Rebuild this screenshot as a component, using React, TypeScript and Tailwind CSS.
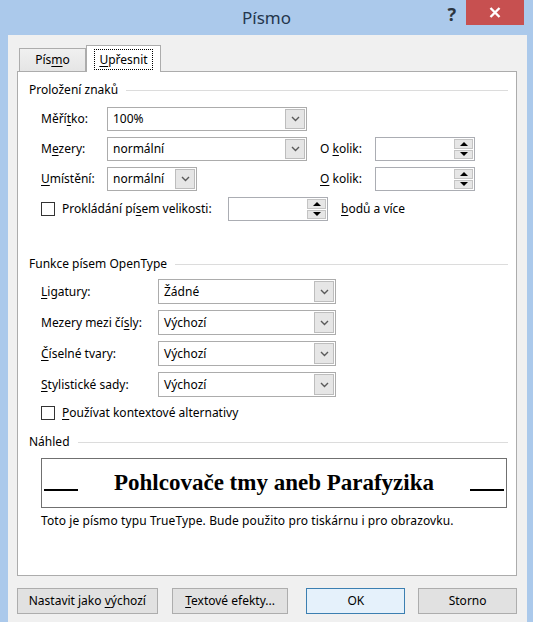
import type { ReactNode } from 'react'

function Chevron() {
  return (
    <svg width="9" height="6" viewBox="0 0 9 6">
      <path d="M1 1l3.5 3.5L8 1" stroke="#5a5a5a" strokeWidth="1.4" fill="none" />
    </svg>
  )
}

function Select({ value, className }: { value: string; className: string }) {
  return (
    <div className={`flex border border-[#acacac] bg-white ${className}`}>
      <span className="flex-1 pl-[5px] flex items-center">{value}</span>
      <span className="w-[20px] m-px border border-[#bdbdbd] bg-[#e6e6e6] flex items-center justify-center">
        <Chevron />
      </span>
    </div>
  )
}

function Spin({ className }: { className: string }) {
  return (
    <div className={`flex border border-[#abadb3] bg-white ${className}`}>
      <span className="flex-1" />
      <span className="w-[19px] m-px flex flex-col gap-px">
        <span className="flex-1 bg-[#e6e6e6] border border-[#c4c4c4] flex items-center justify-center">
          <span className="w-0 h-0 border-x-[4px] border-x-transparent border-b-[4px] border-b-black" />
        </span>
        <span className="flex-1 bg-[#e6e6e6] border border-[#c4c4c4] flex items-center justify-center">
          <span className="w-0 h-0 border-x-[4px] border-x-transparent border-t-[4px] border-t-black" />
        </span>
      </span>
    </div>
  )
}

function Heading({ children, className }: { children: ReactNode; className: string }) {
  return (
    <div className={`flex items-center h-[16px] pr-[8px] ${className}`}>
      <span>{children}</span>
      <span className="flex-1 ml-[8px] h-px bg-[#dcdcdc]" />
    </div>
  )
}

function Check() {
  return <span className="w-[14px] h-[14px] border border-[#333] bg-white shrink-0" />
}

function Button({ children, className }: { children: ReactNode; className: string }) {
  return (
    <div className={`h-[26px] flex items-center justify-center bg-[#e1e1e1] border ${className}`}>
      {children}
    </div>
  )
}

export default function App() {
  return (
    <div className="w-[533px] h-[622px] overflow-hidden bg-[#abc9eb] flex flex-col font-['Noto_Sans',sans-serif] text-[12px] text-black">
      {/* title bar */}
      <div className="h-[35px] flex shrink-0">
        <div className="flex-1" />
        <div className="pt-[5px] text-[17px] text-[#24364d]">Písmo</div>
        <div className="flex-1 flex justify-end items-start">
          <span className="mt-[2px] mr-[10px] text-[18px] font-bold text-[#2c3540] leading-[24px]">?</span>
          <span className="w-[58px] h-[25px] mr-[9px] bg-[#c75050] flex items-center justify-center">
            <svg width="12" height="11" viewBox="0 0 12 11">
              <path d="M1.5 1l9 9M10.5 1l-9 9" stroke="#fff" strokeWidth="2.4" />
            </svg>
          </span>
        </div>
      </div>

      {/* client area */}
      <div className="flex-1 ml-[8px] mr-[6px] bg-[#f0f0f0] flex flex-col pl-[9px] pr-[10px]">
        {/* tabs */}
        <div className="h-[36px] flex items-end pl-[2px]">
          <div className="w-[67px] h-[23px] border border-b-0 border-[#acacac] bg-gradient-to-b from-[#f0f0f0] to-[#e5e5e5] flex items-center justify-center">
            Pís<u className="underline-offset-2">m</u>o
          </div>
          <div className="w-[75px] h-[27px] -mb-px relative border border-b-0 border-[#acacac] bg-white flex items-center justify-center">
            <span className="px-[4px] py-[1px] border border-dotted border-black leading-[17px]">
              <u className="underline-offset-2">U</u>přesnit
            </span>
          </div>
        </div>

        {/* tab page */}
        <div className="h-[505px] border border-[#acacac] bg-white pl-[11px] flex flex-col">
          <Heading className="mt-[10px]">Proložení znaků</Heading>

          <div className="mt-[9px] h-[24px] flex items-center pl-[12px]">
            <span className="w-[66px]">Měří<u className="underline-offset-2">t</u>ko:</span>
            <Select value="100%" className="w-[200px] h-[24px]" />
          </div>

          <div className="mt-[6px] h-[24px] flex items-center pl-[12px]">
            <span className="w-[66px]">M<u className="underline-offset-2">e</u>zery:</span>
            <Select value="normální" className="w-[200px] h-[24px]" />
            <span className="ml-[13px] w-[55px]">O <u className="underline-offset-2">k</u>olik:</span>
            <Spin className="w-[100px] h-[24px]" />
          </div>

          <div className="mt-[6px] h-[24px] flex items-center pl-[12px]">
            <span className="w-[66px]"><u className="underline-offset-2">U</u>místění:</span>
            <Select value="normální" className="w-[90px] h-[24px]" />
            <span className="ml-[123px] w-[55px]"><u className="underline-offset-2">O</u> kolik:</span>
            <Spin className="w-[100px] h-[24px]" />
          </div>

          <div className="mt-[6px] h-[24px] flex items-center pl-[12px]">
            <Check />
            <span className="ml-[7px] w-[166px]">Prokládání pí<u className="underline-offset-2">s</u>em velikosti:</span>
            <Spin className="w-[100px] h-[24px]" />
            <span className="ml-[13px]"><u className="underline-offset-2">b</u>odů a více</span>
          </div>

          <Heading className="mt-[35px]">Funkce písem OpenType</Heading>

          <div className="mt-[7px] h-[25px] flex items-center pl-[12px]">
            <span className="w-[117px]"><u className="underline-offset-2">L</u>igatury:</span>
            <Select value="Žádné" className="w-[178px] h-[25px]" />
          </div>
          <div className="mt-[6px] h-[25px] flex items-center pl-[12px]">
            <span className="w-[117px]">Mezery mezi čí<u className="underline-offset-2">s</u>ly:</span>
            <Select value="Výchozí" className="w-[178px] h-[25px]" />
          </div>
          <div className="mt-[6px] h-[25px] flex items-center pl-[12px]">
            <span className="w-[117px]"><u className="underline-offset-2">Č</u>íselné tvary:</span>
            <Select value="Výchozí" className="w-[178px] h-[25px]" />
          </div>
          <div className="mt-[6px] h-[25px] flex items-center pl-[12px]">
            <span className="w-[117px]"><u className="underline-offset-2">S</u>tylistické sady:</span>
            <Select value="Výchozí" className="w-[178px] h-[25px]" />
          </div>

          <div className="mt-[8px] h-[16px] flex items-center pl-[12px]">
            <Check />
            <span className="ml-[7px]"><u className="underline-offset-2">P</u>oužívat kontextové alternativy</span>
          </div>

          <Heading className="mt-[13px]">Náhled</Heading>

          <div className="mt-[8px] ml-[12px] w-[466px] h-[50px] border border-[#707070] flex items-end pb-[16px] px-[2px]">
            <span className="w-[34px] border-b-2 border-black" />
            <span className="flex-1 text-center font-['Liberation_Serif',serif] font-bold text-[23px] leading-[23px] translate-y-[3px]">
              Pohlcovače tmy aneb Parafyzika
            </span>
            <span className="w-[34px] border-b-2 border-black" />
          </div>

          <div className="mt-[5px] h-[16px] pl-[12px] flex items-center tracking-[0.1px]">
            Toto je písmo typu TrueType. Bude použito pro tiskárnu i pro obrazovku.
          </div>
        </div>

        {/* buttons */}
        <div className="mt-[12px] flex">
          <Button className="w-[141px] border-[#adadad]">
            <span>Nastavit jako <u className="underline-offset-2">v</u>ýchozí</span>
          </Button>
          <Button className="ml-[14px] w-[117px] border-[#adadad]">
            <span><u className="underline-offset-2">T</u>extové efekty...</span>
          </Button>
          <Button className="ml-[18px] w-[99px] border-[#3c7fb1] bg-[#e5f1fb]">OK</Button>
          <Button className="ml-[13px] w-[99px] border-[#adadad]">Storno</Button>
        </div>
      </div>
    </div>
  )
}
